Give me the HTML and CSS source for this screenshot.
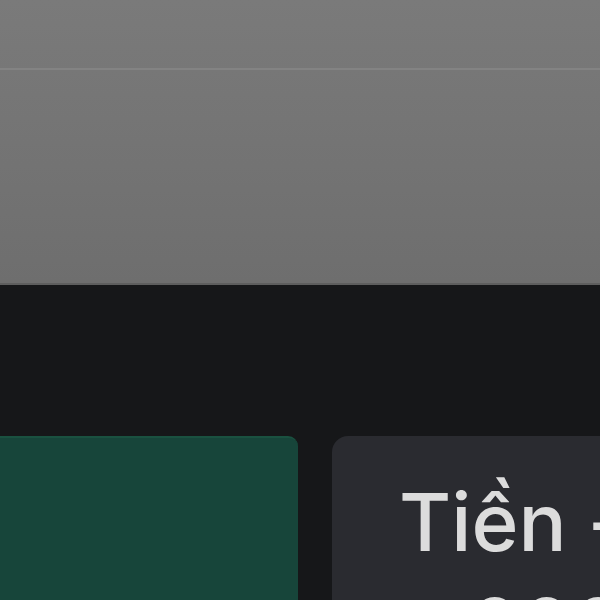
FILE: index.html
```html
<!DOCTYPE html>
<html lang="vi">
<head>
    <meta charset="UTF-8">
    <meta name="viewport" content="width=device-width, initial-scale=1.0">
    <title>Tiền</title>
    <link rel="stylesheet" href="styles.css">
</head>
<body>
    <div class="top-panel">
        <div class="top-strip"></div>
        <div class="top-body"></div>
    </div>

    <div class="cards">
        <div class="card card-green"></div>
        <div class="card card-gray">
            <div class="card-title">Tiền -</div>
            <div class="card-value">000</div>
        </div>
    </div>
</body>
</html>
```

FILE: styles.css
```css
body {
    margin: 0;
    padding: 0;
    background: #161719;
    font-family: 'Inter', 'Liberation Sans', sans-serif;
    overflow: hidden;
    height: 600px;
}

.top-panel {
    height: 285px;
    background: linear-gradient(#7a7a7a, #6e6e6e);
    border-bottom: 2px solid #5e5e5e;
    box-sizing: border-box;
}

.top-strip {
    height: 70px;
    border-bottom: 2px solid #838383;
    box-sizing: border-box;
}

.cards {
    display: flex;
    gap: 34px;
    margin-top: 151px;
    height: 164px;
    overflow: hidden;
}

.card {
    height: 100%;
}

.card-green {
    width: 298px;
    background: #17453a;
    border-top: 2px solid #1a5140;
    border-radius: 0 10px 0 0;
}

.card-gray {
    flex: 1;
    background: #2a2b30;
    border-radius: 16px 0 0 0;
    padding: 40px 0 0 67px;
    color: #dcdcdc;
    overflow: hidden;
}

.card-title {
    font-size: 80px;
    font-weight: 500;
    line-height: 92px;
    white-space: nowrap;
}

.card-value {
    font-size: 80px;
    font-weight: 500;
    line-height: 92px;
    margin: 13px 0 0 70px;
    white-space: nowrap;
}
```
